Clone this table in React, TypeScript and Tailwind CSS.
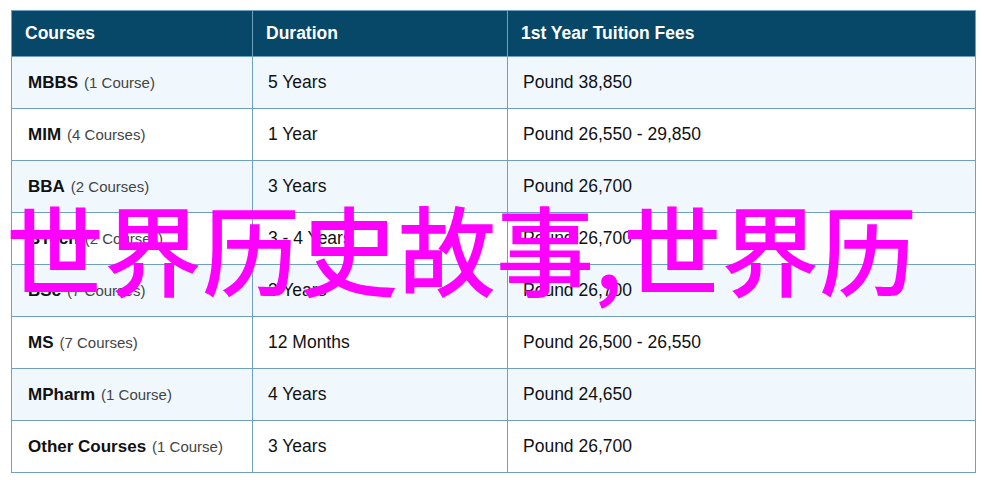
const rows = [
  { name: "MBBS", count: "(1 Course)", duration: "5 Years", fee: "Pound 38,850" },
  { name: "MIM", count: "(4 Courses)", duration: "1 Year", fee: "Pound 26,550 - 29,850" },
  { name: "BBA", count: "(2 Courses)", duration: "3 Years", fee: "Pound 26,700" },
  { name: "BTech", count: "(2 Courses)", duration: "3 - 4 Years", fee: "Pound 26,700" },
  { name: "BSc", count: "(7 Courses)", duration: "3 Years", fee: "Pound 26,700" },
  { name: "MS", count: "(7 Courses)", duration: "12 Months", fee: "Pound 26,500 - 26,550" },
  { name: "MPharm", count: "(1 Course)", duration: "4 Years", fee: "Pound 24,650" },
  { name: "Other Courses", count: "(1 Course)", duration: "3 Years", fee: "Pound 26,700" },
];

export default function App() {
  return (
    <div className="relative w-[984px] h-[483px] bg-white font-['Liberation_Sans',Arial,sans-serif] text-[#111]">
      <div className="pl-[11px] pt-[10px]">
        <table className="w-[965px] border-collapse table-fixed">
          <colgroup>
            <col className="w-[241px]" />
            <col className="w-[255px]" />
            <col />
          </colgroup>
          <thead>
            <tr className="h-[46px] bg-[#074767] text-white text-[17.5px] font-bold text-left">
              <th className="border border-[#6fa0bf] pl-[13px]">Courses</th>
              <th className="border border-[#6fa0bf] pl-[13px]">Duration</th>
              <th className="border border-[#6fa0bf] pl-[13px]">1st Year Tuition Fees</th>
            </tr>
          </thead>
          <tbody>
            {rows.map((r, i) => (
              <tr key={i} className={i % 2 === 0 ? "h-[52px] bg-[#f0f8fe]" : "h-[52px] bg-white"}>
                <td className="border border-[#6fa0bf] pl-[16px]">
                  <span className="font-bold text-[17px]">{r.name}</span>
                  <span className="ml-[6px] text-[15px] text-[#444]">{r.count}</span>
                </td>
                <td className="border border-[#6fa0bf] pl-[15px] text-[17.5px]">{r.duration}</td>
                <td className="border border-[#6fa0bf] pl-[15px] text-[17.5px]">{r.fee}</td>
              </tr>
            ))}
          </tbody>
        </table>
      </div>
      <div className="absolute left-[6px] top-[197px] text-[98px] leading-[98px] font-medium text-[#ff00ff] whitespace-nowrap font-['Noto_Sans_CJK_SC',sans-serif]">
        世界历史故事,世界历
      </div>
    </div>
  );
}
